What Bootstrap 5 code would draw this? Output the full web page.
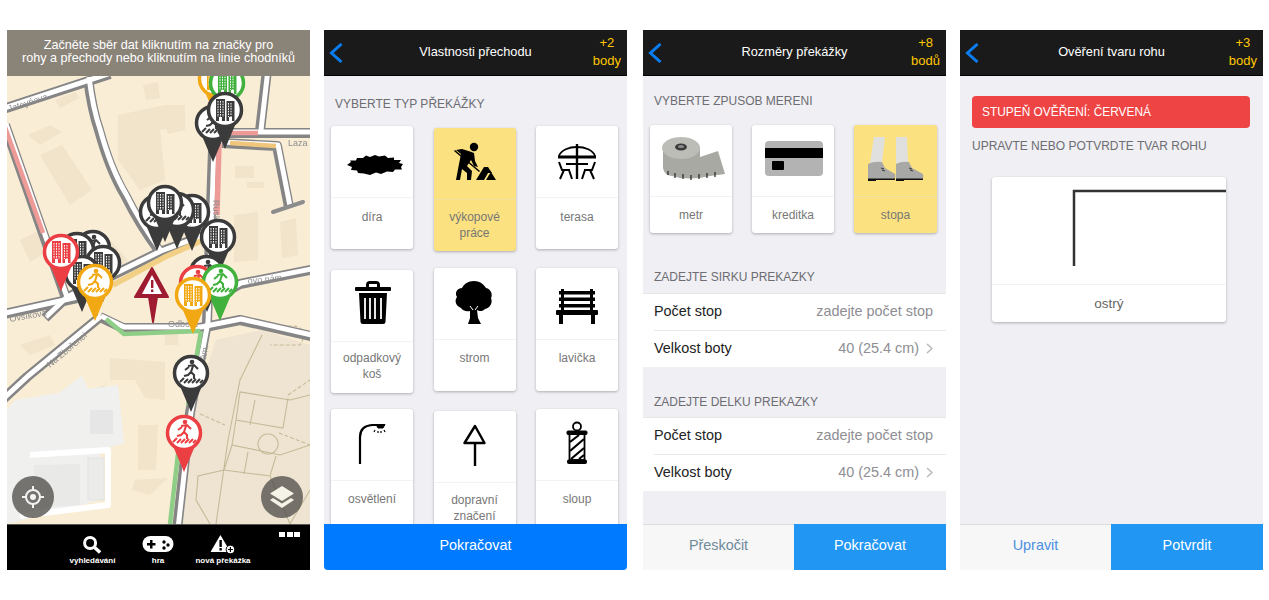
<!DOCTYPE html>
<html lang="cs">
  <head>
    <meta charset="UTF-8" />
    <meta name="viewport" content="width=device-width, initial-scale=1.0" />
    <title>Sběr dat o překážkách</title>
    <link href="https://cdn.jsdelivr.net/npm/bootstrap@5.3.0/dist/css/bootstrap.min.css" rel="stylesheet" />
    <style>
      body { font-family: "Liberation Sans", Arial, sans-serif; background: #fff; margin: 0; }
      .screens { padding: 30px 6px 0 7px; width: 1269px; height: 600px; overflow: hidden; }
      .phone { width: 303px; height: 540px; background: #efeff4; flex: none; }
      .gap-a { margin-right: 14px; }
      .gap-b { margin-right: 16px; }

      /* map screen */
      .hint { height: 46px; background: #8a8378; color: #fff; font-size: 12.6px; line-height: 13px; padding-top: 9px; text-align: center; }
      .map-box { height: 448px; position: relative; background: #f9edd6; overflow: hidden; }
      .map-box > svg { display: block; filter: blur(0.35px); }
      .map-btn { position: absolute; bottom: 6px; width: 42px; height: 42px; border-radius: 50%; background: rgba(82, 80, 76, 0.78); }
      .map-btn.at-left { left: 5px; }
      .map-btn.at-right { right: 7px; }
      .tabs { height: 46px; background: #000; border-top: 1px solid #555; position: relative; color: #fff; font-size: 8px; font-weight: 700; line-height: 10px; }
      .tab { position: absolute; top: 10px; text-align: center; white-space: nowrap; transform: translateX(-50%); }
      .tab svg { display: block; margin: 0 auto 2px; }
      .more { position: absolute; top: 7px; right: 10px; gap: 1.5px; }
      .more i { display: block; width: 6px; height: 5px; background: #fff; }
      .road-g { fill: none; stroke: #858585; stroke-width: 10; stroke-linejoin: round; }
      .road-w { fill: none; stroke: #fff; stroke-width: 5; stroke-linejoin: round; }
      .c-dark { color: #3b3b3b; }
      .c-red { color: #ec3f43; }
      .c-orange { color: #f2a813; }
      .c-green { color: #3fb13c; }

      /* shared screen parts */
      .topbar { height: 46px; background: #1a1a1a; border-bottom: 1px solid #000; color: #fff; position: relative; font-size: 12.8px; padding-bottom: 2px; }
      .back { position: absolute; left: 5px; top: 13px; }
      .score { position: absolute; right: 6px; top: 4px; text-align: center; color: #ffc800; line-height: 18px; font-size: 13px; }
      .sect-title { color: #6d6d72; font-size: 12px; line-height: 14px; margin: 0; }
      .screen-body { height: 448px; overflow: hidden; position: relative; }
      .tile { width: 82px; border: 0; border-radius: 3px; background: #fff; box-shadow: 0 1px 3px rgba(0, 0, 0, 0.28); color: #777; font-size: 12px; line-height: 16px; text-align: center; }
      .tile.picked { background: #fbe17f; }
      .tile-pic { height: 72px; border-bottom: 1px solid #f3f3f3; }
      .tile.picked .tile-pic { border-bottom-color: #efe0a0; }
      .tile-pic svg { display: block; }
      .tile-text { padding-top: 10px; }
      .tile-text.low { padding-top: 11px; }
      .tile-text.high { padding-top: 9px; }
      .tile-text.higher { padding-top: 8px; }
      .foot-btn { height: 46px; border: 0; border-radius: 0; font-size: 14.4px; line-height: 42px; padding: 0; text-align: center; }
      .foot-btn.go { background: #2196f3; color: #fff; flex-grow: 1; }
      .foot-btn.skip { background: #f7f7f7; border-top: 1px solid #ddd; line-height: 41px; width: 151px; flex: none; }
      .foot-full { background: #007bff; color: #fff; border-bottom-left-radius: 4px; border-bottom-right-radius: 4px; }

      /* screen 2 */
      .type-head { padding: 21px 0 0 11px; height: 50px; }
      .type-grid { display: grid; grid-template-columns: repeat(3, 82px); justify-content: space-between; grid-auto-rows: 124px; row-gap: 17.5px; padding: 0 9px 0 7px; }
      .type-grid .tile { height: 123px; }
      .type-grid .tile.drop { margin-top: 2px; }

      /* screen 3 */
      .size-head { padding: 18px 0 0 11px; height: 49px; }
      .size-tiles { padding: 0 9px 0 7px; }
      .size-tiles .tile { height: 108px; }
      .size-tiles .tile.wide { width: 83px; }
      .sect-gap { padding: 37px 0 9px 11px; }
      .sect-gap.tight { padding: 28px 0 8px 11px; }
      .rows { --bs-list-group-border-radius: 0; border-top: 1px solid #e6e6e6; background: #fff; }
      .rows .list-group-item { height: 36.5px; padding: 0 13px 0 0; margin-left: 11px; border: 0; border-bottom: 1px solid #e8e8e8; background: #fff; font-size: 14.4px; color: #222; line-height: 34px; }
      .rows .list-group-item:last-child { border-bottom: 0; }
      .row-val { color: #8e8e93; }
      .row-val svg { margin-left: 7px; vertical-align: -1px; }

      /* screen 4 */
      .alert-red { margin: 20px 13px 0 12px; height: 32px; background: #ee4444; color: #fff; border: 0; border-radius: 4px; font-size: 11.9px; line-height: 32px; padding: 0 10px; }
      .corner-head { padding: 11px 0 0 12px; height: 49px; }
      .corner-card { width: 234px; height: 145px; margin-left: 32px; font-size: 13.5px; color: #666; }
      .corner-card .tile-pic { height: 108px; }
      .corner-card .tile-text { padding-top: 11px; }
    </style>
  </head>
  <body>
    <div class="screens d-flex">
      <!-- mapa -->
      <div class="phone gap-a">
        <div class="hint">Začněte sběr dat kliknutím na značky pro<br />rohy a přechody nebo kliknutím na linie chodníků</div>
        <div class="map-box">
          <svg width="303" height="448" viewBox="7 76 303 448">
            <defs>
              <g id="roads">
                <path d="M0 110 L110 74" />
                <path d="M88 78 Q92 110 99 130 Q110 170 125 195 Q140 225 160 252" />
                <path d="M5 125 L43 233 L66 298" />
                <path d="M45 318 L66 298 L160 252 L203 236 L212 233" />
                <path d="M213 150 L210 237 L207 323 L190 413 L177 530" />
                <path d="M267 70 L260 131" />
                <path d="M222 133 L315 133" />
                <path d="M222 143 L277 146 L289 207" />
                <path d="M100 317 L123 328 L200 328 L240 320 L315 337" />
                <path d="M0 402 L27 377 L100 317" />
                <path d="M0 315 L77 298" />
                <path d="M212 300 L240 284 L315 269" />
              </g>
              <g id="tw">
                <rect x="-9" y="-11" width="9" height="22" fill="currentColor" />
                <rect x="1.500" y="-9" width="8" height="20" fill="currentColor" />
                <path d="M-7 -9V7M-4.500 -9V7M-2 -9V7M3.500 -7V7M6 -7V7" stroke="#fff" stroke-width="1" stroke-dasharray="1.600 1" fill="none" />
                <rect x="-6" y="7" width="3" height="4" fill="#fff" />
                <rect x="4" y="7" width="3" height="4" fill="#fff" />
              </g>
              <g id="xing">
                <circle cx="1" cy="-11" r="2.300" fill="currentColor" />
                <path d="M-3 -7 L3 -8 L7 -4 M2 -7 L0 -1 L3 2 L3 6 M0 -1 L-3 2 L-7 3 M-2 -6 L-6 -3" fill="none" stroke="currentColor" stroke-width="2.100" />
                <path d="M-11 9 L-7 5 M-7 10 L-3 6 M-3 10 L1 6 M1 10 L5 6 M5 10 L9 6 M9 10 L12 7" stroke="currentColor" stroke-width="2" />
              </g>
              <g id="pinB">
                <path d="M-11 13 L0 39 L11 13 Z" fill="currentColor" />
                <circle r="16.500" fill="#fff" stroke="currentColor" stroke-width="3.500" />
                <use href="#tw" />
              </g>
              <g id="pinX">
                <path d="M-11 13 L0 39 L11 13 Z" fill="currentColor" />
                <circle r="16.500" fill="#fff" stroke="currentColor" stroke-width="3.500" />
                <use href="#xing" />
              </g>
            </defs>

            <!-- parcely a budovy -->
            <g fill="#f2e3cb">
              <path d="M28 135 L50 125 L62 132 L40 145 Z M40 155 L62 145 L92 190 L70 205 Z M118 115 L165 105 L185 105 L185 125 L160 130 L165 180 L140 190 L118 160 Z" />
              <path d="M143 85 L158 82 L160 98 L146 100 Z M55 100 L75 92 L80 98 L60 108 Z M165 125 L185 120 L185 130 L168 134 Z" />
              <path d="M235 166 L254 166 L254 178 L235 178 Z M247 182 L264 182 L264 188 L247 188 Z M234 215 L258 212 L258 260 L234 262 Z M280 222 L296 218 L298 255 L282 258 Z" />
              <path d="M20 345 L50 335 L55 345 L30 355 Z M110 358 L165 362 L165 400 L145 398 L135 380 L110 380 Z M165 325 L178 325 L178 345 L165 345 Z M90 390 L105 385 L108 392 L92 398 Z M138 425 L158 425 L156 470 L138 470 Z M135 480 L168 478 L150 495 L132 490 Z" />
              <path d="M80 265 L110 240 L128 260 L98 285 Z M20 240 L40 230 L50 250 L30 262 Z" />
            </g>
            <path d="M216 340 L262 330 L310 345 L310 524 L176 524 L193 410 Z" fill="#efe4d2" />
            <g fill="none" stroke="#c4bb98" stroke-width="1.100">
              <path d="M262 335 L240 380 L228 440 L216 524 M310 395 L290 400 L240 392 L236 420 L283 428 L288 398 M236 420 L232 445 L280 455 L310 445 M268 434 A10 10 0 1 0 268.100 434 M232 445 L224 470 L270 476 L276 456 M224 470 L198 476 L196 500 L210 524 M255 400 L250 425 M248 452 L244 474 M270 476 L290 524 L310 490" />
              <path d="M200 414 L225 425 M279 433 L310 445 M270 330 C300 320 310 330 300 345 L270 345 M288 395 L310 380" stroke-dasharray="4 2" />
            </g>
            <path d="M15 400 L65 392 L118 385 L124 443 L100 450 L100 500 L7 524 L7 410 Z" fill="#f0f0ef" />
            <path d="M30 455 L108 450 L108 505 L20 516" fill="none" stroke="#fff" stroke-width="6" stroke-linejoin="round" />
            <rect x="90" y="410" width="23" height="24" fill="#e6e6e6" />
            <rect x="88" y="458" width="16" height="42" fill="#ebebea" stroke="#e2e2e2" />
            <path d="M34 465 L80 464 L80 505 L34 508 Z" fill="#e9e9e8" />
            <path d="M60 392 L82 376 L95 404 L60 420 Z" fill="#f0f0ef" />

            <!-- ulice -->
            <use href="#roads" class="road-g" />
            <use href="#roads" class="road-w" transform="translate(1 -1)" />
            <g fill="none" stroke-width="4.500">
              <path d="M5 127 L43 233" stroke="#ee9a96" />
              <path d="M219 143 L217 215" stroke="#ee9a96" stroke-width="5.500" />
              <path d="M230 133 L258 133" stroke="#ee9a96" />
              <path d="M230 143 L276 146" stroke="#f0c67d" />
              <path d="M113 285 L165 257 L201 241" stroke="#f1cf85" stroke-width="5.500" />
              <path d="M106 319 L124 334 L200 331" stroke="#8fce87" />
              <path d="M201 331 L188 405 M179 445 L170 524" stroke="#8fce87" />
            </g>
            <path d="M273 212 L303 202" stroke="#8c8c8c" stroke-width="4" stroke-linecap="round" />
            <g font-family="Liberation Sans, Arial, sans-serif" font-size="9" fill="#8d8d8d">
              <text x="9" y="112" transform="rotate(-18 9 112)">Jateyńova</text>
              <text x="168" y="327">Odborů</text>
              <text x="248" y="284" transform="rotate(-6 248 284)">ovo nám.</text>
              <text x="288" y="146">Laza</text>
              <text x="213" y="200" transform="rotate(88 213 200)">Ruská</text>
              <text x="205" y="365" transform="rotate(-80 205 365)">nám.</text>
              <text x="50" y="368" transform="rotate(-40 50 368)">Na Zbořenci</text>
              <text x="10" y="322" transform="rotate(-10 10 322)">Ovsíkova</text>
            </g>

            <!-- značky -->
            <use href="#pinB" class="c-orange" x="216" y="79" />
            <use href="#pinB" class="c-green" x="227" y="83" />
            <use href="#pinX" class="c-dark" x="213" y="123" />
            <use href="#pinB" class="c-dark" x="225" y="110" />
            <use href="#pinX" class="c-dark" x="157" y="212" />
            <use href="#pinB" class="c-dark" x="192" y="212" />
            <use href="#pinX" class="c-dark" x="177" y="210" />
            <use href="#pinB" class="c-dark" x="165" y="203" />
            <use href="#pinB" class="c-dark" x="218" y="237" />
            <use href="#pinX" class="c-dark" x="93" y="248" />
            <use href="#pinB" class="c-dark" x="77" y="250" />
            <use href="#pinB" class="c-dark" x="103" y="263" />
            <use href="#pinB" class="c-dark" x="82" y="273" />
            <use href="#pinB" class="c-red" x="61" y="252" />
            <use href="#pinX" class="c-orange" x="95" y="282" />
            <path d="M152 268 L168 297 L157 297 L153 322 L149 297 L135 297 Z" fill="#9e1b32" stroke="#9e1b32" stroke-width="2" stroke-linejoin="round" />
            <path d="M152 275 L162 294 L142 294 Z" fill="#fff" />
            <path d="M151 280h2.400v8h-2.400zM151 289.500h2.400v2.500h-2.400z" fill="#9e1b32" />
            <use href="#pinX" class="c-dark" x="207" y="273" />
            <use href="#pinX" class="c-red" x="197" y="283" />
            <use href="#pinX" class="c-green" x="220" y="282" />
            <use href="#pinB" class="c-orange" x="193" y="295" />
            <use href="#pinX" class="c-dark" x="191" y="373" />
            <use href="#pinX" class="c-red" x="184" y="433" />
          </svg>
          <div class="map-btn at-left d-flex align-items-center justify-content-center">
            <svg width="24" height="24" viewBox="0 0 24 24" fill="none" stroke="#f2f2f2">
              <circle cx="12" cy="12" r="7" stroke-width="2" />
              <circle cx="12" cy="12" r="3" fill="#f2f2f2" stroke="none" />
              <path d="M12 1v4M12 19v4M1 12h4M19 12h4" stroke-width="2" />
            </svg>
          </div>
          <div class="map-btn at-right d-flex align-items-center justify-content-center">
            <svg width="26" height="24" viewBox="0 0 26 24" fill="#f5f3e8">
              <path d="M13 1 L25 8.500 L13 16 L1 8.500 Z" />
              <path d="M4 13 L13 18.500 L22 13 L25 15 L13 23 L1 15 Z" />
            </svg>
          </div>
        </div>
        <div class="tabs">
          <div class="tab" style="left: 85.500px">
            <svg width="20" height="19" viewBox="0 0 20 19" fill="none" stroke="#fff">
              <circle cx="8" cy="8" r="5.500" stroke-width="3" />
              <path d="M12 12 L18 17.500" stroke-width="3.500" />
            </svg>
            vyhledávání
          </div>
          <div class="tab" style="left: 151px">
            <svg width="32" height="19" viewBox="0 0 32 19">
              <rect x="0.500" y="1" width="31" height="16" rx="8" fill="#fff" />
              <path d="M7 6h3v-3h2.500v3h3v2.500h-3v3h-2.500v-3h-3z" fill="#000" transform="translate(-2 2)" />
              <circle cx="22" cy="7" r="1.700" fill="#000" />
              <circle cx="26" cy="10" r="1.700" fill="#000" />
              <circle cx="22" cy="13" r="1.700" fill="#000" />
            </svg>
            hra
          </div>
          <div class="tab" style="left: 216px">
            <svg width="26" height="19" viewBox="0 0 26 19">
              <path d="M10 0 L20 17 L0 17 Z" fill="#fff" />
              <path d="M9 5h2.400v7h-2.400zM9 13h2.400v2.400h-2.400z" fill="#000" />
              <circle cx="20" cy="14.500" r="4.300" fill="#fff" stroke="#000" />
              <path d="M20 12v5M17.500 14.500h5" stroke="#000" stroke-width="1.200" />
            </svg>
            nová překážka
          </div>
          <div class="more d-flex"><i></i><i></i><i></i></div>
        </div>
      </div>

      <!-- typ překážky -->
      <div class="phone gap-b">
        <div class="topbar d-flex align-items-center justify-content-center">
          <svg class="back" width="14" height="20" viewBox="0 0 14 20" fill="none" stroke="#0a7df0" stroke-width="3"><path d="M12.500 1 L2.500 10 L12.500 19" /></svg>
          <span>Vlastnosti přechodu</span>
          <div class="score">+2<br />body</div>
        </div>
        <div class="screen-body">
          <div class="type-head"><p class="sect-title">VYBERTE TYP PŘEKÁŽKY</p></div>
          <div class="type-grid">
            <div class="card tile">
              <div class="tile-pic">
                <svg width="82" height="72" viewBox="0 0 82 72"><path d="M16 39 L20 36 L19 34.500 L25 34.500 L26 32 L32 32 L35 29.500 L39 31 L44 29 L48 30.500 L54 29.500 L57 32 L63 31.500 L63 34 L70 34 L68 37 L72 38 L70 41 L71 43.500 L64 43.500 L62 46 L56 45.500 L50 48 L45 46.500 L39 49 L33 47.500 L27 47 L26 44.500 L20 44 L21 41 Z" fill="#000" /></svg>
              </div>
              <div class="tile-text low">díra</div>
            </div>
            <div class="card tile picked drop">
              <div class="tile-pic">
                <svg width="82" height="72" viewBox="0 0 82 72">
                  <circle cx="40" cy="19" r="4.200" />
                  <path d="M22 22 L28 21 L36 23.500 L40 25 L41 33 L44 39 L40 38 L37 32 L33 38 L38 43 L37 52 L33 52 L33 45 L28 41 L26 52 L22 52 L25 36 L27 26 Z" />
                  <path d="M21 22 L46 43 L45 44 L20 23 Z" />
                  <path d="M42 52 L50 39 L54 39 L58 45 L54 45 L50 52 Z" />
                  <path d="M52 52 L55 47 L57 44 L62 52 Z" />
                </svg>
              </div>
              <div class="tile-text high">výkopové<br />práce</div>
            </div>
            <div class="card tile">
              <div class="tile-pic">
                <svg width="82" height="72" viewBox="0 0 82 72" fill="none" stroke="#000" stroke-width="2">
                  <path d="M23 30 C25 24 33 21 41 21 C49 21 57 24 59 30" stroke-width="1.800" />
                  <path d="M22 31 H60" stroke-width="2.800" />
                  <path d="M41 18 V53" stroke-width="2.400" />
                  <path d="M30 38 H52" stroke-width="2" />
                  <path d="M23 36 L26 44 L34 44 M28 44 L24 53 M33 44 L36 53 M59 36 L56 44 L48 44 M54 44 L58 53 M49 44 L46 53" />
                </svg>
              </div>
              <div class="tile-text low">terasa</div>
            </div>

            <div class="card tile drop">
              <div class="tile-pic">
                <svg width="82" height="72" viewBox="0 0 82 72">
                  <path d="M35 15 Q35 11 39 11 H45 Q49 11 49 15 V17 H46 V14 H38 V17 H35 Z" />
                  <rect x="24" y="17" width="36" height="4" rx="1" />
                  <path d="M28 23 H56 L54.500 52 Q54.500 54 52 54 H32 Q29.500 54 29.500 52 Z" />
                  <path d="M34 28 V49 M39 28 V49 M44 28 V49 M50 28 V49" stroke="#fff" stroke-width="1.800" />
                </svg>
              </div>
              <div class="tile-text higher">odpadkový<br />koš</div>
            </div>
            <div class="card tile">
              <div class="tile-pic">
                <svg width="82" height="72" viewBox="0 0 82 72">
                  <path d="M40 13 C47 13 50 17 52 20 C57 21 59 27 57 30 C59 35 56 40 51 41 C48 44 45 43 43 42 L44 50 L47 56 H34 L36 50 L36 43 C32 44 28 42 27 40 C22 38 20 33 23 29 C20 24 24 20 28 20 C30 16 34 13 40 13 Z" />
                  <path d="M36 38 L39 42 M44 38 L41 42" stroke="#fff" stroke-width="1" />
                </svg>
              </div>
              <div class="tile-text">strom</div>
            </div>
            <div class="card tile">
              <div class="tile-pic">
                <svg width="82" height="72" viewBox="0 0 82 72">
                  <path d="M23 23 H59 V26.500 H23 Z M23 29.500 H59 V33 H23 Z M23 36 H59 V39.500 H23 Z" />
                  <path d="M25 21 H28 V42 H25 Z M54 21 H57 V42 H54 Z" />
                  <rect x="20" y="42" width="42" height="5" rx="1" />
                  <path d="M23 47 H27 V56 H23 Z M55 47 H59 V56 H55 Z" />
                </svg>
              </div>
              <div class="tile-text">lavička</div>
            </div>

            <div class="card tile">
              <div class="tile-pic">
                <svg width="82" height="72" viewBox="0 0 82 72" fill="none" stroke="#000" stroke-width="2.200">
                  <path d="M29 55 V28 Q29 17 41 16 H48" />
                  <path d="M45 15.500 H54 L52 19 H47 Z" fill="#000" stroke-width="1" />
                  <path d="M47 22 V24 M50 22 L50 24 M53 21 L54 23 M44 21 L43 23" stroke-width="1.200" />
                </svg>
              </div>
              <div class="tile-text">osvětlení</div>
            </div>
            <div class="card tile drop">
              <div class="tile-pic">
                <svg width="82" height="72" viewBox="0 0 82 72" fill="none" stroke="#000" stroke-width="2.400">
                  <path d="M41 15 L50.500 32 H30.500 Z" stroke-linejoin="round" />
                  <path d="M41 32 V55" />
                </svg>
              </div>
              <div class="tile-text high">dopravní<br />značení</div>
            </div>
            <div class="card tile">
              <div class="tile-pic">
                <svg width="82" height="72" viewBox="0 0 82 72" fill="none" stroke="#000">
                  <circle cx="41" cy="17.500" r="4" stroke-width="1.800" />
                  <rect x="31" y="22" width="20" height="3.500" fill="#000" rx="1" />
                  <rect x="31.500" y="51" width="19" height="3.500" fill="#000" rx="1" />
                  <rect x="33.500" y="25" width="15" height="26" stroke-width="1.800" />
                  <path d="M34 33 L43 26 M34 42 L48 30 M35 50 L48 39 M43 50 L48 46" stroke-width="2.200" />
                </svg>
              </div>
              <div class="tile-text">sloup</div>
            </div>
          </div>
        </div>
        <div class="foot-btn foot-full fw-normal">Pokračovat</div>
      </div>

      <!-- rozměry -->
      <div class="phone gap-a">
        <div class="topbar d-flex align-items-center justify-content-center">
          <svg class="back" width="14" height="20" viewBox="0 0 14 20" fill="none" stroke="#0a7df0" stroke-width="3"><path d="M12.500 1 L2.500 10 L12.500 19" /></svg>
          <span>Rozměry překážky</span>
          <div class="score">+8<br />bodů</div>
        </div>
        <div class="screen-body">
          <div class="size-head"><p class="sect-title">VYBERTE ZPUSOB MERENI</p></div>
          <div class="size-tiles d-flex justify-content-between">
            <div class="card tile">
              <div class="tile-pic">
                <svg width="82" height="71" viewBox="0 0 82 71">
                  <path d="M13 25 V43 Q14 50 22 51 Q38 56 60 51 L75 49 L68 26 L50 32 L50 22 Z" fill="#a9a9a3" />
                  <ellipse cx="31" cy="23" rx="19" ry="11" fill="#bdbdb7" />
                  <ellipse cx="31" cy="22" rx="6" ry="3.500" fill="#3a3a3a" />
                  <ellipse cx="31" cy="21.500" rx="3" ry="1.500" fill="#8a8a8a" />
                  <path d="M18 46v4M25 48v5M33 49v5M41 50v5M49 49v5M57 48v5M65 47v5" stroke="#222" stroke-width="1.200" />
                </svg>
              </div>
              <div class="tile-text">metr</div>
            </div>
            <div class="card tile">
              <div class="tile-pic">
                <svg width="82" height="71" viewBox="0 0 82 71">
                  <rect x="13" y="16" width="58" height="35" rx="4" fill="#b3b3b3" />
                  <rect x="13" y="23" width="58" height="10" fill="#000" />
                  <rect x="20" y="36" width="12" height="9" rx="1" fill="#000" />
                </svg>
              </div>
              <div class="tile-text">kreditka</div>
            </div>
            <div class="card tile picked wide">
              <div class="tile-pic">
                <svg width="83" height="71" viewBox="0 0 83 71">
                  <path d="M20 12 H31 L28 38 H16 Z M42 12 H53 L54 38 H42 Z" fill="#e0e0de" />
                  <path d="M14 39 Q20 36 28 37 L31 43 L41 49 Q42 53 40 54 H14 Z" fill="#a8a8a6" />
                  <path d="M42 39 Q48 36 55 37 L58 43 L69 49 Q70 53 68 54 H42 Z" fill="#a8a8a6" />
                  <path d="M14 53.500 H41 V55 H22 V56 H14 Z M42 53.500 H69 V55 H50 V56 H42 Z" fill="#111" />
                  <path d="M27 43l3 1M28 45l3 1M55 43l3 1M56 45l3 1" stroke="#444" stroke-width="1.200" />
                </svg>
              </div>
              <div class="tile-text">stopa</div>
            </div>
          </div>
          <div class="sect-gap"><p class="sect-title">ZADEJTE SIRKU PREKAZKY</p></div>
          <div class="rows list-group">
            <div class="list-group-item d-flex justify-content-between"><span>Počet stop</span><span class="row-val">zadejte počet stop</span></div>
            <div class="list-group-item d-flex justify-content-between"><span>Velkost boty</span><span class="row-val">40 (25.4 cm)<svg width="7" height="11" viewBox="0 0 7 11" fill="none" stroke="#b5b5b5" stroke-width="1.300"><path d="M1 1 L6 5.500 L1 10" /></svg></span></div>
          </div>
          <div class="sect-gap tight"><p class="sect-title">ZADEJTE DELKU PREKAZKY</p></div>
          <div class="rows list-group">
            <div class="list-group-item d-flex justify-content-between"><span>Počet stop</span><span class="row-val">zadejte počet stop</span></div>
            <div class="list-group-item d-flex justify-content-between"><span>Velkost boty</span><span class="row-val">40 (25.4 cm)<svg width="7" height="11" viewBox="0 0 7 11" fill="none" stroke="#b5b5b5" stroke-width="1.300"><path d="M1 1 L6 5.500 L1 10" /></svg></span></div>
          </div>
        </div>
        <div class="d-flex">
          <div class="foot-btn skip" style="color: #6f8a99">Přeskočit</div>
          <div class="foot-btn go">Pokračovat</div>
        </div>
      </div>

      <!-- ověření -->
      <div class="phone">
        <div class="topbar d-flex align-items-center justify-content-center">
          <svg class="back" width="14" height="20" viewBox="0 0 14 20" fill="none" stroke="#0a7df0" stroke-width="3"><path d="M12.500 1 L2.500 10 L12.500 19" /></svg>
          <span>Ověření tvaru rohu</span>
          <div class="score">+3<br />body</div>
        </div>
        <div class="screen-body">
          <div class="alert-red">STUPEŇ OVĚŘENÍ: ČERVENÁ</div>
          <div class="corner-head"><p class="sect-title">UPRAVTE NEBO POTVRDTE TVAR ROHU</p></div>
          <div class="card tile corner-card">
            <div class="tile-pic">
              <svg width="234" height="108" viewBox="0 0 234 108" fill="none" stroke="#333" stroke-width="2.500"><path d="M82 89 V14 H234" /></svg>
            </div>
            <div class="tile-text">ostrý</div>
          </div>
        </div>
        <div class="d-flex">
          <div class="foot-btn skip" style="color: #4a90e2">Upravit</div>
          <div class="foot-btn go">Potvrdit</div>
        </div>
      </div>
    </div>
    <script src="https://cdn.jsdelivr.net/npm/bootstrap@5.3.0/dist/js/bootstrap.bundle.min.js"></script>
  </body>
</html>
